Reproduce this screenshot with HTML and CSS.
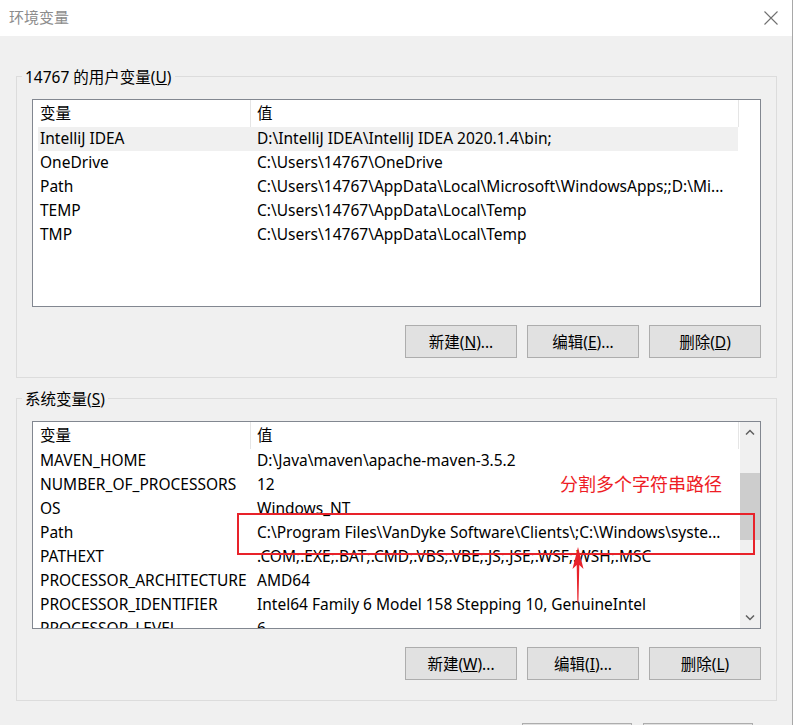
FILE: index.html
```html
<!DOCTYPE html>
<html lang="zh-CN">
<head>
    <meta charset="UTF-8">
    <meta name="viewport" content="width=device-width, initial-scale=1.0">
    <title>环境变量</title>
    <link rel="stylesheet" href="styles.css">
</head>
<body>
    <div class="window">
        <div class="titlebar">
            <span class="title">环境变量</span>
            <svg class="close" width="14" height="14" viewBox="0 0 14 14">
                <path d="M0.5 0.5 L13.5 13.5 M13.5 0.5 L0.5 13.5" stroke="#707070" stroke-width="1.1" fill="none"/>
            </svg>
        </div>

        <div class="content">
            <div class="group">
                <div class="group-title">14767 的用户变量(<u>U</u>)</div>
                <div class="list">
                    <div class="list-body">
                        <div class="list-head">
                            <div class="hcell col-name">变量</div>
                            <div class="hcell col-value">值</div>
                        </div>
                        <div class="row selected">
                            <div class="cell col-name">IntelliJ IDEA</div>
                            <div class="cell col-value">D:\IntelliJ IDEA\IntelliJ IDEA 2020.1.4\bin;</div>
                        </div>
                        <div class="row">
                            <div class="cell col-name">OneDrive</div>
                            <div class="cell col-value">C:\Users\14767\OneDrive</div>
                        </div>
                        <div class="row">
                            <div class="cell col-name">Path</div>
                            <div class="cell col-value">C:\Users\14767\AppData\Local\Microsoft\WindowsApps;;D:\Mi...</div>
                        </div>
                        <div class="row">
                            <div class="cell col-name">TEMP</div>
                            <div class="cell col-value">C:\Users\14767\AppData\Local\Temp</div>
                        </div>
                        <div class="row">
                            <div class="cell col-name">TMP</div>
                            <div class="cell col-value">C:\Users\14767\AppData\Local\Temp</div>
                        </div>
                    </div>
                </div>
                <div class="buttons">
                    <button class="btn">新建(<u>N</u>)...</button>
                    <button class="btn">编辑(<u>E</u>)...</button>
                    <button class="btn">删除(<u>D</u>)</button>
                </div>
            </div>

            <div class="group group-system">
                <div class="group-title">系统变量(<u>S</u>)</div>
                <div class="list">
                    <div class="list-body">
                        <div class="list-head">
                            <div class="hcell col-name">变量</div>
                            <div class="hcell col-value">值</div>
                        </div>
                        <div class="row">
                            <div class="cell col-name">MAVEN_HOME</div>
                            <div class="cell col-value">D:\Java\maven\apache-maven-3.5.2</div>
                        </div>
                        <div class="row">
                            <div class="cell col-name">NUMBER_OF_PROCESSORS</div>
                            <div class="cell col-value">12</div>
                        </div>
                        <div class="row">
                            <div class="cell col-name">OS</div>
                            <div class="cell col-value">Windows_NT</div>
                        </div>
                        <div class="row">
                            <div class="cell col-name">Path</div>
                            <div class="cell col-value">C:\Program Files\VanDyke Software\Clients\;C:\Windows\syste...</div>
                        </div>
                        <div class="row">
                            <div class="cell col-name">PATHEXT</div>
                            <div class="cell col-value">.COM;.EXE;.BAT;.CMD;.VBS;.VBE;.JS;.JSE;.WSF;.WSH;.MSC</div>
                        </div>
                        <div class="row">
                            <div class="cell col-name">PROCESSOR_ARCHITECTURE</div>
                            <div class="cell col-value">AMD64</div>
                        </div>
                        <div class="row">
                            <div class="cell col-name">PROCESSOR_IDENTIFIER</div>
                            <div class="cell col-value">Intel64 Family 6 Model 158 Stepping 10, GenuineIntel</div>
                        </div>
                        <div class="row">
                            <div class="cell col-name">PROCESSOR_LEVEL</div>
                            <div class="cell col-value">6</div>
                        </div>
                    </div>
                    <div class="scrollbar">
                        <div class="sb-btn">
                            <svg width="10" height="6" viewBox="0 0 10 6"><path d="M1 5.5 L5 1.5 L9 5.5" stroke="#606060" stroke-width="1.5" fill="none"/></svg>
                        </div>
                        <div class="sb-track"><div class="sb-thumb"></div></div>
                        <div class="sb-btn">
                            <svg width="10" height="6" viewBox="0 0 10 6"><path d="M1 0.5 L5 4.5 L9 0.5" stroke="#606060" stroke-width="1.5" fill="none"/></svg>
                        </div>
                    </div>
                </div>
                <div class="buttons">
                    <button class="btn">新建(<u>W</u>)...</button>
                    <button class="btn">编辑(<u>I</u>)...</button>
                    <button class="btn">删除(<u>L</u>)</button>
                </div>
            </div>

            <div class="dialog-buttons">
                <button class="btn btn-small">确定</button>
                <button class="btn btn-small">取消</button>
            </div>
        </div>

        <!-- 标注 -->
        <svg class="markup" width="793" height="725" viewBox="0 0 793 725">
            <rect x="238" y="514" width="516" height="40" fill="none" stroke="#e8222a" stroke-width="2"/>
            <polygon points="578,547 583.5,569 579.3,565 578.4,603 577.4,603 576.7,565 572.5,569" fill="#e8222a"/>
        </svg>
        <div class="note">分割多个字符串路径</div>
    </div>
</body>
</html>
```

FILE: styles.css
```css
body {
    margin: 0;
    font-family: "Noto Sans", "Noto Sans CJK SC", sans-serif;
    font-size: 15.5px;
    color: #000;
    background: #f0f0f0;
    overflow: hidden;
}

.window {
    position: relative;
    width: 792px;
    height: 725px;
    background: #f0f0f0;
    border-right: 1px solid #a8a8a8;
    overflow: hidden;
}

.titlebar {
    height: 36px;
    background: #fff;
    display: flex;
    align-items: center;
    padding: 0 14px 0 9px;
}

.title {
    color: #8c8c8c;
    font-family: "Noto Sans CJK SC", sans-serif;
    font-size: 15px;
    line-height: 20px;
    margin-top: -2px;
}

.close {
    margin-left: auto;
}

.content {
    padding: 0 15px 0 16px;
}

.group {
    margin-top: 40px;
    border: 1px solid #dcdcdc;
    padding: 0 15px 19px;
}

.group-system {
    margin-top: 20px;
    padding-bottom: 20px;
}

.group-title {
    width: fit-content;
    margin: -10px 0 0 -10px;
    padding: 0 3px;
    line-height: 20px;
    background: #f0f0f0;
}

.list {
    margin-top: 12px;
    height: 208px;
    box-sizing: border-box;
    border: 1px solid #828790;
    background: #fff;
    display: flex;
    overflow: hidden;
}

.list-body {
    flex: 1;
    overflow: hidden;
}

.list-head {
    display: flex;
    width: 706px;
    height: 27px;
    line-height: 26px;
}

.hcell {
    box-sizing: border-box;
    border-right: 1px solid #e5e5e5;
}

.hcell.col-name {
    width: 218px;
    padding-left: 7px;
}

.hcell.col-value {
    width: 488px;
    padding-left: 6px;
}

.row {
    display: flex;
    width: 700px;
    height: 24px;
    line-height: 23px;
    margin-left: 5px;
    white-space: nowrap;
}

.row.selected {
    background: #f0f0f0;
}

.cell {
    box-sizing: border-box;
    overflow: hidden;
}

.cell.col-name {
    width: 212px;
    padding-left: 2px;
}

.cell.col-value {
    flex: 1;
    padding-left: 7px;
}

.scrollbar {
    width: 20px;
    background: #f0f0f0;
    display: flex;
    flex-direction: column;
}

.sb-btn {
    height: 20px;
    display: flex;
    align-items: center;
    justify-content: center;
}

.sb-track {
    flex: 1;
}

.sb-thumb {
    margin-top: 31px;
    height: 67px;
    background: #cdcdcd;
}

.buttons {
    margin-top: 18px;
    display: flex;
    justify-content: flex-end;
    gap: 10px;
}

.btn {
    width: 112px;
    height: 33px;
    padding: 0 0 1px;
    background: #e1e1e1;
    border: 1px solid #adadad;
    border-radius: 0;
    font-family: "Noto Sans", "Noto Sans CJK SC", sans-serif;
    font-size: 15.5px;
    color: #000;
}

.dialog-buttons {
    margin: 22px 24px 0 0;
    display: flex;
    justify-content: flex-end;
    gap: 11px;
}

.btn-small {
    width: 110px;
}

.markup {
    position: absolute;
    left: 0;
    top: 0;
    pointer-events: none;
}

.note {
    position: absolute;
    left: 560px;
    top: 471px;
    color: #ee1d25;
    font-family: "Noto Sans CJK SC", sans-serif;
    font-size: 18px;
    line-height: 24px;
}
```
